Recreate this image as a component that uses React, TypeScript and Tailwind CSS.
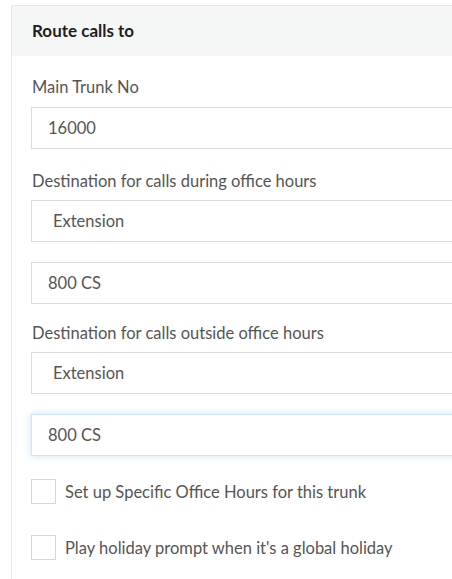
import React from "react";

const font = { fontFamily: "Lato, 'Noto Sans', sans-serif" };

function TextBox({ value, focused, indent }: { value: string; focused?: boolean; indent?: boolean }) {
  return (
    <div
      className={
        "h-[42px] w-[440px] bg-white border flex items-center text-[16.5px] text-[#555] " +
        (indent ? "pl-[21px] " : "pl-[16px] ") +
        (focused
          ? "border-[#d3e5f5] shadow-[0_0_7px_rgba(102,175,233,0.35)]"
          : "border-[#dcdcdc]")
      }
    >
      {value}
    </div>
  );
}

function Label({ children }: { children: React.ReactNode }) {
  return <div className="text-[16.5px] leading-[24px] text-[#555] pl-[1px]">{children}</div>;
}

function Check({ children }: { children: React.ReactNode }) {
  return (
    <div className="flex items-center gap-[9px]">
      <div className="w-[25px] h-[25px] border border-[#d6d6d6] bg-white shrink-0" />
      <span className="text-[16.5px] leading-[24px] text-[#555]">{children}</span>
    </div>
  );
}

export default function App() {
  return (
    <div className="w-[452px] h-[579px] bg-white overflow-hidden pt-[5px] pl-[11px]" style={font}>
      <div className="w-[470px] border border-[#e8e8e8]">
        <div className="h-[50px] bg-[#f5f6f6] flex items-center px-[20px] text-[17px] font-bold text-[#1f1f1f]">
          Route calls to
        </div>
        <div className="px-[19px] pt-[19px] bg-white">
          <Label>Main Trunk No</Label>
          <div className="mt-[8px]">
            <TextBox value="16000" />
          </div>
          <div className="mt-[20px]">
            <Label>Destination for calls during office hours</Label>
          </div>
          <div className="mt-[7px]">
            <TextBox value="Extension" indent />
          </div>
          <div className="mt-[20px]">
            <TextBox value="800 CS" />
          </div>
          <div className="mt-[17px]">
            <Label>Destination for calls outside office hours</Label>
          </div>
          <div className="mt-[7px]">
            <TextBox value="Extension" indent />
          </div>
          <div className="mt-[20px]">
            <TextBox value="800 CS" focused />
          </div>
          <div className="mt-[23px] flex flex-col gap-[31px] pb-[20px]">
            <Check>Set up Specific Office Hours for this trunk</Check>
            <Check>Play holiday prompt when it's a global holiday</Check>
          </div>
        </div>
      </div>
    </div>
  );
}
